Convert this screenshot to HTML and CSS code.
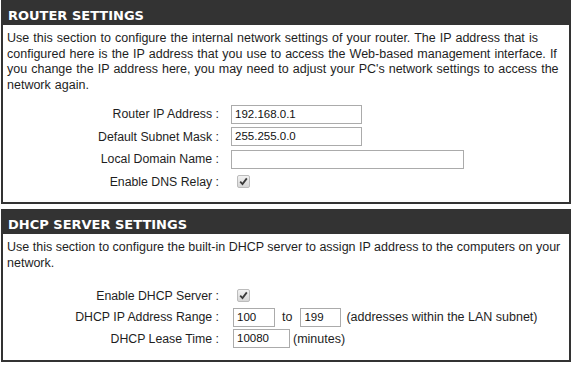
FILE: index.html
```html
<!DOCTYPE html>
<html>
<head>
<meta charset="utf-8">
<link rel="stylesheet" href="styles.css">
</head>
<body>
<div class="section first">
  <h2 class="head">ROUTER SETTINGS</h2>
  <div class="body">
    <p class="intro">Use this section to configure the internal network settings of your router. The IP address that is<br>configured here is the IP address that you use to access the Web-based management interface. If<br>you change the IP address here, you may need to adjust your PC's network settings to access the<br>network again.</p>
    <div class="form">
      <div class="label">Router IP Address :</div>
      <div class="field"><span class="input w130">192.168.0.1</span></div>
      <div class="label">Default Subnet Mask :</div>
      <div class="field"><span class="input w130">255.255.0.0</span></div>
      <div class="label">Local Domain Name :</div>
      <div class="field"><span class="input w232"></span></div>
      <div class="label">Enable DNS Relay :</div>
      <div class="field"><span class="check"><svg width="9" height="9" viewBox="0 0 9 9"><path d="M1.2 4.6 L3.5 7 L7.8 1.4" fill="none" stroke="#3a3a3a" stroke-width="1.8"/></svg></span></div>
    </div>
  </div>
</div>
<div class="section second">
  <h2 class="head">DHCP SERVER SETTINGS</h2>
  <div class="body">
    <p class="intro tight">Use this section to configure the built-in DHCP server to assign IP address to the computers on your<br>network.</p>
    <div class="form dhcp">
      <div class="label">Enable DHCP Server :</div>
      <div class="field"><span class="check"><svg width="9" height="9" viewBox="0 0 9 9"><path d="M1.2 4.6 L3.5 7 L7.8 1.4" fill="none" stroke="#3a3a3a" stroke-width="1.8"/></svg></span></div>
      <div class="label">DHCP IP Address Range :</div>
      <div class="field"><span class="input w42 first-in">100</span><span class="txt to">to</span><span class="input w41">199</span><span class="txt">(addresses within the LAN subnet)</span></div>
      <div class="label">DHCP Lease Time :</div>
      <div class="field"><span class="input w57 first-in">10080</span><span class="txt mins">(minutes)</span></div>
    </div>
  </div>
</div>
</body>
</html>
```
FILE: styles.css
```css
html, body {
  margin: 0;
  padding: 0;
  background: #ffffff;
}
body {
  padding: 0 2px 0 1px;
  font-family: "Liberation Sans", Arial, sans-serif;
  font-size: 12.5px;
  color: #1e1e1e;
}
.section {
  border: 2px solid #333333;
  border-top: 0;
}
.first {
  height: 202px;
}
.second {
  margin-top: 5px;
  height: 151px;
}
.head {
  box-sizing: border-box;
  margin: 0 -2px;
  height: 25px;
  padding: 6px 0 0 7px;
  line-height: 19px;
  background: #333333;
  color: #ffffff;
  font-family: "DejaVu Sans", Verdana, sans-serif;
  font-weight: bold;
  font-size: 13px;
}
.body {
  padding: 6px 4px 0 4px;
}
.intro {
  margin: 0;
  line-height: 15.5px;
  word-spacing: 0.6px;
  white-space: nowrap;
}
.intro.tight {
  word-spacing: 0;
}
.form {
  display: grid;
  grid-template-columns: 216px 1fr;
  column-gap: 12px;
  grid-auto-rows: 22.5px;
  margin-top: 10px;
  margin-left: -4px;
}
.form.dhcp {
  margin-top: 14px;
  grid-auto-rows: 21.5px;
}
.label {
  display: flex;
  align-items: center;
  justify-content: flex-end;
  text-align: right;
  font-size: 12.3px;
}
.field {
  display: flex;
  align-items: center;
}
.input {
  box-sizing: border-box;
  display: inline-block;
  height: 19px;
  border: 1px solid #ababab;
  background: #fff;
  font-size: 11.5px;
  line-height: 17px;
  padding-left: 3px;
  color: #111;
}
.first-in { margin-left: 2px; }
.w130 { width: 131px; }
.w232 { width: 233px; }
.w42 { width: 42px; }
.w41 { width: 41px; }
.w57 { width: 57px; }
.txt {
  margin-left: 5px;
}
.to {
  margin-left: 7px;
  margin-right: 8px;
}
.mins {
  margin-left: 3px;
}
.check {
  box-sizing: border-box;
  display: flex;
  align-items: center;
  justify-content: center;
  width: 13px;
  height: 13px;
  margin-left: 6px;
  border: 1px solid #bcbcbc;
  border-radius: 2px;
  background: linear-gradient(#f2f2f2, #d6d6d6);
}
```
